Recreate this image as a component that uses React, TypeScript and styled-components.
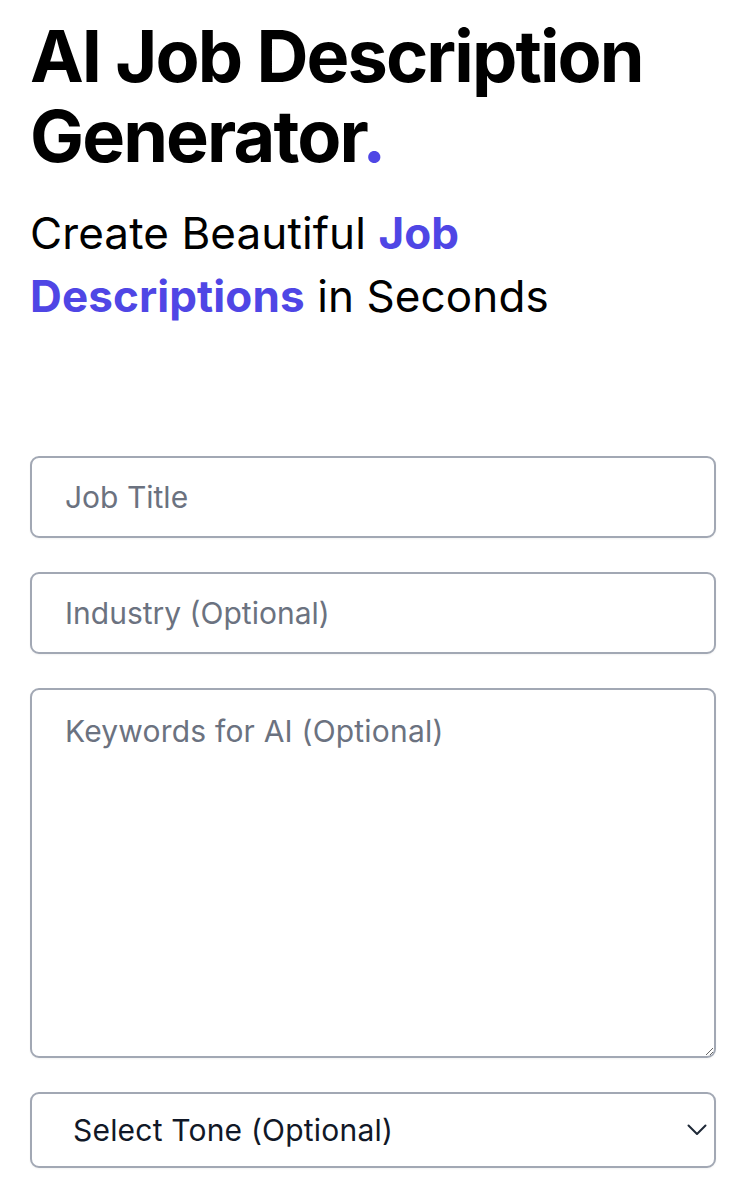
import React from "react";
import styled, { createGlobalStyle } from "styled-components";

const Global = createGlobalStyle`
  html, body { margin: 0; padding: 0; background: #ffffff; }
  body { font-family: Inter, "Noto Sans", sans-serif; color: #000; }
  * { box-sizing: border-box; }
`;

const Page = styled.main`
  padding: 16px 27px 40px 30px;
  display: flex;
  flex-direction: column;
`;

const Title = styled.h1`
  margin: 0;
  font-size: 72px;
  line-height: 80px;
  font-weight: 700;
  letter-spacing: -1.9px;
  color: #000;
`;

const Accent = styled.span<{ $bold?: boolean }>`
  color: #4f46e5;
  font-weight: ${(p) => (p.$bold ? 700 : "inherit")};
`;

const Subtitle = styled.h2`
  margin: 26px 0 0;
  font-size: 44px;
  line-height: 63px;
  font-weight: 400;
  letter-spacing: 0.1px;
  color: #000;
  max-width: 560px;
`;

const Form = styled.form`
  margin-top: 128px;
  display: flex;
  flex-direction: column;
  gap: 34px;
`;

const fieldBase = `
  width: 100%;
  border: 2px solid #a2a8b4;
  border-radius: 9px;
  background: #fff;
  font-family: Inter, "Noto Sans", sans-serif;
  font-size: 30px;
  color: #111827;
  outline: none;
  box-shadow: 0 1px 2px rgba(0,0,0,0.05);
  &::placeholder { color: #6b7280; opacity: 1; }
`;

const TextInput = styled.input`
  ${fieldBase}
  height: 82px;
  padding: 0 33px;
`;

const TextArea = styled.textarea`
  ${fieldBase}
  height: 370px;
  padding: 20px 33px;
  line-height: 42px;
  letter-spacing: 0.2px;
  resize: vertical;
  display: block;
`;

const SelectWrap = styled.div`
  position: relative;
`;

const Select = styled.select`
  ${fieldBase}
  appearance: none;
  -webkit-appearance: none;
  height: 76px;
  padding: 0 60px 0 41px;
  letter-spacing: 0.2px;
  color: #111827;
`;

const Chevron = styled.svg`
  position: absolute;
  right: 9px;
  top: 50%;
  transform: translateY(-50%);
  pointer-events: none;
`;

export default function App() {
  return (
    <>
      <Global />
      <Page>
        <Title>
          AI Job Description Generator<Accent>.</Accent>
        </Title>
        <Subtitle>
          Create Beautiful <Accent $bold>Job Descriptions</Accent> in Seconds
        </Subtitle>
        <Form onSubmit={(e) => e.preventDefault()}>
          <TextInput placeholder="Job Title" />
          <TextInput placeholder="Industry (Optional)" />
          <TextArea placeholder="Keywords for AI (Optional)" />
          <SelectWrap>
            <Select defaultValue="">
              <option value="">Select Tone (Optional)</option>
              <option value="professional">Professional</option>
              <option value="friendly">Friendly</option>
              <option value="casual">Casual</option>
            </Select>
            <Chevron width="20" height="12" viewBox="0 0 20 12" fill="none">
              <path d="M1.5 1.5 L10 10 L18.5 1.5" stroke="#1f2937" strokeWidth="2" strokeLinecap="round" strokeLinejoin="round" />
            </Chevron>
          </SelectWrap>
        </Form>
      </Page>
    </>
  );
}
